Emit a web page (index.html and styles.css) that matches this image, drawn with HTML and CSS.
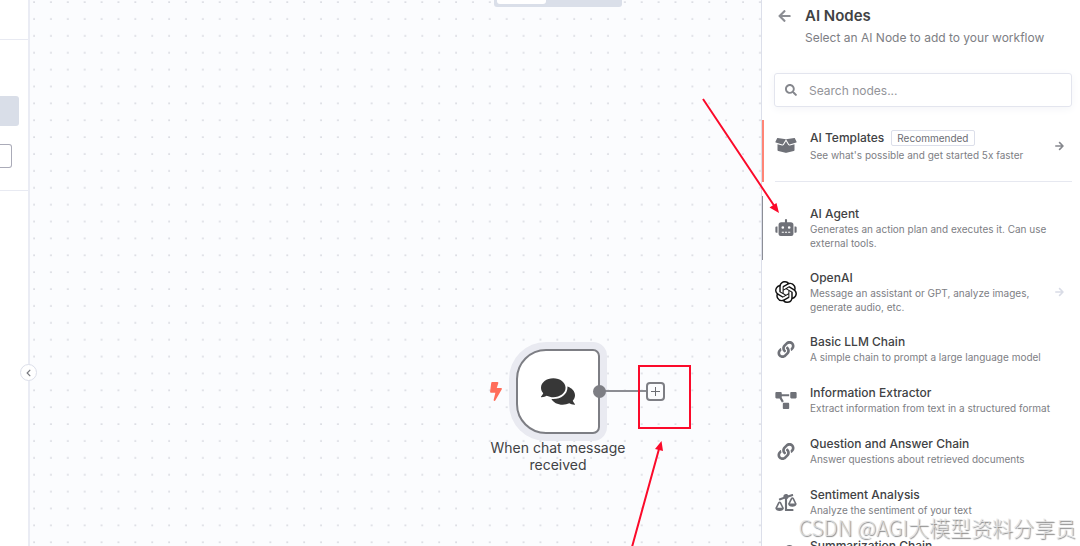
FILE: index.html
```html
<!DOCTYPE html>
<html lang="en">
<head>
    <meta charset="UTF-8">
    <meta name="viewport" content="width=device-width, initial-scale=1.0">
    <title>AI Nodes</title>
    <link rel="stylesheet" href="styles.css">
</head>
<body>
    <!-- Shared icons -->
    <svg class="sprite" aria-hidden="true">
        <symbol id="arrow" viewBox="0 0 448 512"><path d="M257.5 445.1l-22.2 22.2c-9.4 9.4-24.6 9.4-33.9 0L7 273c-9.4-9.4-9.4-24.6 0-33.9L201.4 44.7c9.4-9.4 24.6-9.4 33.9 0l22.2 22.2c9.5 9.5 9.3 25-.4 34.3L136.6 216H424c13.3 0 24 10.7 24 24v32c0 13.3-10.7 24-24 24H136.6l120.5 114.8c9.8 9.3 10 24.8.4 34.3z"/></symbol>
        <symbol id="link" viewBox="0 0 512 512"><path d="M326.612 185.391c59.747 59.809 58.927 155.698.36 214.59-.11.12-.24.25-.36.37l-67.2 67.2c-59.27 59.27-155.699 59.262-214.96 0-59.27-59.26-59.27-155.7 0-214.96l37.106-37.106c9.84-9.84 26.786-3.3 27.294 10.606.648 17.722 3.826 35.527 9.69 52.721 1.986 5.822.567 12.262-3.783 16.612l-13.087 13.087c-28.026 28.026-28.905 73.66-1.155 101.96 28.024 28.579 74.086 28.749 102.325.51l67.2-67.19c28.191-28.191 28.073-73.757 0-101.83-3.701-3.694-7.429-6.564-10.341-8.569a16.037 16.037 0 0 1-6.947-12.606c-.396-10.567 3.348-21.456 11.698-29.806l21.054-21.055c5.521-5.521 14.182-6.199 20.584-1.731a152.482 152.482 0 0 1 20.522 17.197zM467.547 44.449c-59.261-59.262-155.69-59.27-214.96 0l-67.2 67.2c-.12.12-.25.25-.36.37-58.566 58.892-59.387 154.781.36 214.59a152.454 152.454 0 0 0 20.521 17.196c6.402 4.468 15.064 3.789 20.584-1.731l21.054-21.055c8.35-8.35 12.094-19.239 11.698-29.806a16.037 16.037 0 0 0-6.947-12.606c-2.912-2.005-6.64-4.875-10.341-8.569-28.073-28.073-28.191-73.639 0-101.83l67.2-67.19c28.239-28.239 74.3-28.069 102.325.51 27.75 28.3 26.872 73.934-1.155 101.96l-13.087 13.087c-4.35 4.35-5.769 10.79-3.783 16.612 5.864 17.194 9.042 34.999 9.69 52.721.509 13.906 17.454 20.446 27.294 10.606l37.106-37.106c59.271-59.259 59.271-155.699.001-214.959z"/></symbol>
    </svg>

    <div class="app">
        <aside class="sidebar">
            <div class="sidebar-top"></div>
            <div class="sidebar-menu">
                <div class="sidebar-active"></div>
                <div class="sidebar-box"></div>
            </div>
            <button class="collapse" aria-label="Collapse sidebar">
                <svg viewBox="0 0 320 512"><path d="M34.52 239.03L228.87 44.69c9.37-9.37 24.57-9.37 33.94 0l22.67 22.67c9.36 9.36 9.37 24.52.04 33.9L131.49 256l154.02 154.75c9.34 9.38 9.32 24.54-.04 33.9l-22.67 22.67c-9.37 9.37-24.57 9.37-33.94 0L34.52 272.97c-9.37-9.37-9.37-24.57 0-33.94z"/></svg>
            </button>
        </aside>

        <main class="canvas">
            <svg class="grid" aria-hidden="true">
                <defs>
                    <pattern id="dots" width="16" height="16" patternUnits="userSpaceOnUse" patternTransform="translate(3 1) scale(1.055)">
                        <circle cx="1" cy="1" r="0.8"/>
                    </pattern>
                </defs>
                <rect width="100%" height="100%" fill="url(#dots)"/>
            </svg>

            <div class="tabs"><div class="tab-active"></div></div>

            <svg class="bolt" viewBox="0 0 320 512"><path d="M296 160H180.6l42.6-129.8C227.2 15 215.7 0 200 0H56C44 0 33.8 8.9 32.2 20.8l-32 240C-1.7 275.2 9.5 288 24 288h118.7L96.6 482.5c-3.6 15.2 8 29.5 23.3 29.5 8.4 0 16.4-4.4 20.8-12l176-304c9.3-15.9-2.2-36-20.7-36z"/></svg>
            <div class="node">
                <svg viewBox="0 0 576 512"><path d="M416 192c0-88.4-93.1-160-208-160S0 103.6 0 192c0 34.3 14.1 65.9 38 92-13.4 30.2-35.5 54.2-35.8 54.5-2.2 2.3-2.8 5.7-1.5 8.7S4.8 352 8 352c36.6 0 66.9-12.3 88.7-25 32.2 15.7 70.3 25 111.3 25 114.9 0 208-71.6 208-160zm122 220c23.9-26 38-57.7 38-92 0-66.9-53.5-124.2-129.3-148.1.9 6.6 1.3 13.3 1.3 20.1 0 105.9-107.7 192-240 192-10.8 0-21.3-.8-31.7-1.9C207.8 439.6 281.8 480 368 480c41 0 79.1-9.2 111.3-25 21.8 12.7 52.1 25 88.7 25 3.2 0 6.1-1.9 7.3-4.8 1.3-2.9.7-6.3-1.5-8.7-.3-.3-22.4-24.2-35.8-54.5z"/></svg>
            </div>
            <div class="edge"></div>
            <div class="port"></div>
            <button class="plus" aria-label="Add node">
                <svg viewBox="0 0 11 11"><path d="M5.5 1v9M1 5.500h9"/></svg>
            </button>
            <div class="node-label">When chat message received</div>
        </main>

        <section class="panel">
            <header class="panel-header">
                <button class="back" aria-label="Back"><svg><use href="#arrow"/></svg></button>
                <div>
                    <h1>AI Nodes</h1>
                    <p>Select an AI Node to add to your workflow</p>
                </div>
            </header>

            <label class="search">
                <svg viewBox="0 0 512 512"><path d="M505 442.7L405.3 343c-4.5-4.5-10.6-7-17-7H372c27.6-35.3 44-79.7 44-128C416 93.1 322.9 0 208 0S0 93.1 0 208s93.1 208 208 208c48.3 0 92.7-16.4 128-44v16.3c0 6.4 2.5 12.5 7 17l99.7 99.7c9.4 9.4 24.6 9.4 33.9 0l28.3-28.3c9.4-9.4 9.4-24.6.1-34zM208 336c-70.7 0-128-57.2-128-128 0-70.7 57.2-128 128-128 70.7 0 128 57.2 128 128 0 70.7-57.2 128-128 128z"/></svg>
                <input type="text" placeholder="Search nodes..." aria-label="Search nodes">
            </label>

            <button class="item item-templates">
                <svg class="icon" viewBox="0 0 640 512"><path d="M425.7 256c-16.9 0-32.8-9-41.4-23.4L320 126l-64.2 106.6c-8.7 14.5-24.6 23.5-41.5 23.5-4.5 0-9-.6-13.3-1.9L64 215v178c0 14.7 10 27.5 24.2 31l216.2 54.1c10.2 2.5 20.9 2.5 31 0L551.8 424c14.2-3.6 24.2-16.4 24.2-31V215l-137 39.1c-4.3 1.3-8.8 1.9-13.3 1.9zm212.6-112.2L586.8 41c-3.1-6.2-9.8-9.8-16.7-8.9L320 64l91.7 152.1c3.8 6.3 11.4 9.3 18.5 7.3l197.9-56.5c9.9-2.9 14.7-13.9 10.2-23.1zM53.2 41L1.7 143.8c-4.6 9.2.3 20.2 10.1 23l197.9 56.5c7.1 2 14.7-1 18.5-7.3L320 64 69.8 32.1c-6.9-.8-13.5 2.7-16.6 8.9z"/></svg>
                <span class="text">
                    <span class="title">AI Templates <span class="badge">Recommended</span></span>
                    <span class="desc">See what's possible and get started 5x faster</span>
                </span>
                <svg class="go"><use href="#arrow"/></svg>
            </button>

            <div class="list">
                <button class="item item-active">
                    <svg class="icon" viewBox="0 0 640 512"><path d="M32,224H64V416H32A31.96166,31.96166,0,0,1,0,384V256A31.96166,31.96166,0,0,1,32,224Zm512-48V448a64.06328,64.06328,0,0,1-64,64H160a64.06328,64.06328,0,0,1-64-64V176a79.974,79.974,0,0,1,80-80H288V32a32,32,0,0,1,64,0V96H464A79.974,79.974,0,0,1,544,176ZM264,256a40,40,0,1,0-40,40A39.997,39.997,0,0,0,264,256Zm-8,128H192v32h64Zm96,0H288v32h64ZM456,256a40,40,0,1,0-40,40A39.997,39.997,0,0,0,456,256Zm-8,128H384v32h64ZM640,256V384a31.96166,31.96166,0,0,1-32,32H576V224h32A31.96166,31.96166,0,0,1,640,256Z"/></svg>
                    <span class="text">
                        <span class="title">AI Agent</span>
                        <span class="desc">Generates an action plan and executes it. Can use external tools.</span>
                    </span>
                </button>
                <button class="item">
                    <svg class="icon icon-openai" viewBox="0 0 24 24"><path d="M22.2819 9.8211a5.9847 5.9847 0 0 0-.5157-4.9108 6.0462 6.0462 0 0 0-6.5098-2.9A6.0651 6.0651 0 0 0 4.9807 4.1818a5.9847 5.9847 0 0 0-3.9977 2.9 6.0462 6.0462 0 0 0 .7427 7.0966 5.98 5.98 0 0 0 .511 4.9107 6.051 6.051 0 0 0 6.5146 2.9001A5.9847 5.9847 0 0 0 13.2599 24a6.0557 6.0557 0 0 0 5.7718-4.2058 5.9894 5.9894 0 0 0 3.9977-2.9001 6.0557 6.0557 0 0 0-.7475-7.0729zm-9.022 12.6081a4.4755 4.4755 0 0 1-2.8764-1.0408l.1419-.0804 4.7783-2.7582a.7948.7948 0 0 0 .3927-.6813v-6.7369l2.02 1.1686a.071.071 0 0 1 .038.052v5.5826a4.504 4.504 0 0 1-4.4945 4.4944zm-9.6607-4.1254a4.4708 4.4708 0 0 1-.5346-3.0137l.142.0852 4.783 2.7582a.7712.7712 0 0 0 .7806 0l5.8428-3.3685v2.3324a.0804.0804 0 0 1-.0332.0615L9.74 19.9502a4.4992 4.4992 0 0 1-6.1408-1.6464zM2.3408 7.8956a4.485 4.485 0 0 1 2.3655-1.9728V11.6a.7664.7664 0 0 0 .3879.6765l5.8144 3.3543-2.0201 1.1685a.0757.0757 0 0 1-.071 0l-4.8303-2.7865A4.504 4.504 0 0 1 2.3408 7.872zm16.5963 3.8558L13.1038 8.364 15.1192 7.2a.0757.0757 0 0 1 .071 0l4.8303 2.7913a4.4944 4.4944 0 0 1-.6765 8.1042v-5.6772a.79.79 0 0 0-.407-.667zm2.0107-3.0231l-.142-.0852-4.7735-2.7818a.7759.7759 0 0 0-.7854 0L9.409 9.2297V6.8974a.0662.0662 0 0 1 .0284-.0615l4.8303-2.7866a4.4992 4.4992 0 0 1 6.6802 4.66zM8.3065 12.863l-2.02-1.1638a.0804.0804 0 0 1-.038-.0567V6.0742a4.4992 4.4992 0 0 1 7.3757-3.4537l-.142.0805L8.704 5.459a.7948.7948 0 0 0-.3927.6813zm1.0976-2.3654l2.602-1.4998 2.6069 1.4998v2.9994l-2.5974 1.4997-2.6067-1.4997Z"/></svg>
                    <span class="text">
                        <span class="title">OpenAI</span>
                        <span class="desc">Message an assistant or GPT, analyze images, generate audio, etc.</span>
                    </span>
                    <svg class="go go-light"><use href="#arrow"/></svg>
                </button>
                <button class="item">
                    <svg class="icon"><use href="#link"/></svg>
                    <span class="text">
                        <span class="title">Basic LLM Chain</span>
                        <span class="desc">A simple chain to prompt a large language model</span>
                    </span>
                </button>
                <button class="item">
                    <svg class="icon" viewBox="0 0 640 512"><path d="M384 320H256c-17.67 0-32 14.33-32 32v128c0 17.67 14.33 32 32 32h128c17.67 0 32-14.33 32-32V352c0-17.67-14.33-32-32-32zM192 32c0-17.67-14.33-32-32-32H32C14.33 0 0 14.33 0 32v128c0 17.67 14.33 32 32 32h95.72l73.16 128.04C211.98 300.98 232.4 288 256 288h.28L192 175.51V128h224V64H192V32zM608 0H480c-17.67 0-32 14.33-32 32v128c0 17.67 14.33 32 32 32h128c17.67 0 32-14.33 32-32V32c0-17.67-14.33-32-32-32z"/></svg>
                    <span class="text">
                        <span class="title">Information Extractor</span>
                        <span class="desc">Extract information from text in a structured format</span>
                    </span>
                </button>
                <button class="item">
                    <svg class="icon"><use href="#link"/></svg>
                    <span class="text">
                        <span class="title">Question and Answer Chain</span>
                        <span class="desc">Answer questions about retrieved documents</span>
                    </span>
                </button>
                <button class="item">
                    <svg class="icon" viewBox="0 0 640 512"><path d="M528 448H352V153.25c20.42-8.94 36.1-26.22 43.38-47.47l132-44.26c8.38-2.81 12.89-11.88 10.08-20.26l-10.17-30.34C524.48 2.54 515.41-1.97 507.03.84L389.11 40.37C375.3 16.36 349.69 0 320 0c-44.18 0-80 35.82-80 80 0 3.43.59 6.71 1.01 10.03l-128.39 43.05c-8.38 2.81-12.89 11.88-10.08 20.26l10.17 30.34c2.81 8.38 11.88 12.89 20.26 10.08l142.05-47.63c4.07 2.77 8.43 5.12 12.99 7.12V496c0 8.84 7.16 16 16 16h224c8.84 0 16-7.16 16-16v-32c-.01-8.84-7.17-16-16.01-16zm111.98-144c0-16.18 1.34-8.73-85.05-181.51-17.65-35.29-68.19-35.36-85.87 0-87.12 174.26-85.04 165.84-85.04 181.51H384c0 44.18 57.31 80 128 80s128-35.82 128-80h-.02zM440 288l72-144 72 144H440zm-269.07-37.51c-17.65-35.29-68.19-35.36-85.87 0C-2.06 424.75.02 416.33.02 432H0c0 44.18 57.31 80 128 80s128-35.82 128-80h-.02c0-16.18 1.34-8.73-85.05-181.51zM56 416l72-144 72 144H56z"/></svg>
                    <span class="text">
                        <span class="title">Sentiment Analysis</span>
                        <span class="desc">Analyze the sentiment of your text</span>
                    </span>
                </button>
                <button class="item">
                    <svg class="icon"><use href="#link"/></svg>
                    <span class="text">
                        <span class="title">Summarization Chain</span>
                    </span>
                </button>
            </div>
        </section>
    </div>

    <!-- Red marks over the workflow -->
    <svg class="marks" aria-hidden="true">
        <rect x="639" y="366" width="51" height="62"/>
        <path d="M703 99L775 207M632 547L659 449"/>
        <path class="head" d="M779 213L769.500 207.500L776.500 203ZM661.500 441L655 449L663 451Z"/>
    </svg>

    <div class="watermark">CSDN @AGI大模型资料分享员</div>
</body>
</html>
```
FILE: styles.css
```css
/* General Styles */
* {
    box-sizing: border-box;
}

body {
    margin: 0;
    font-family: Inter, "Noto Sans CJK SC", sans-serif;
    color: #414244;
    background-color: #fff;
    overflow: hidden;
}

button {
    font: inherit;
    color: inherit;
    background: none;
    border: 0;
    padding: 0;
    cursor: pointer;
}

svg {
    fill: currentColor;
    flex-shrink: 0;
}

.sprite {
    position: absolute;
    width: 0;
    height: 0;
}

.app {
    display: flex;
    height: 100vh;
}

/* Sidebar */
.sidebar {
    position: relative;
    width: 30px;
    border-right: 2px solid #eaecf4;
}

.sidebar-top {
    height: 40px;
    border-bottom: 1px solid #e8eaf2;
}

.sidebar-menu {
    display: flex;
    flex-direction: column;
    gap: 18px;
    padding: 56px 0 22px;
    border-bottom: 1px solid #e8eaf2;
}

.sidebar-active {
    width: 19px;
    height: 30px;
    background-color: #d9dee8;
    border-radius: 0 3px 3px 0;
}

.sidebar-box {
    width: 12px;
    height: 24px;
    border: 1px solid #aaabb8;
    border-left: 0;
    border-radius: 0 3px 3px 0;
}

.collapse {
    position: absolute;
    top: 364px;
    right: -9px;
    z-index: 2;
    display: flex;
    align-items: center;
    justify-content: center;
    width: 17px;
    height: 17px;
    color: #77797f;
    background-color: #fff;
    border: 1px solid #dcdfea;
    border-radius: 50%;
}

.collapse svg {
    height: 8px;
}

/* Canvas */
.canvas {
    position: relative;
    flex: 1;
    background-color: #fbfcfe;
    overflow: hidden;
}

.grid {
    display: block;
    width: 100%;
    height: 100%;
    color: #ccced6;
}

.tabs {
    position: absolute;
    top: 0;
    left: 464px;
    width: 128px;
    height: 7px;
    padding: 0 3px;
    background-color: #dadfe9;
    border-radius: 0 0 3px 3px;
}

.tab-active {
    width: 49px;
    height: 4px;
    background-color: #fff;
    border-radius: 0 0 3px 3px;
}

.bolt {
    position: absolute;
    top: 382px;
    left: 460px;
    width: 12px;
    height: 19px;
    color: #ff6d5a;
}

.node {
    position: absolute;
    top: 349px;
    left: 486px;
    display: flex;
    align-items: center;
    justify-content: center;
    width: 84px;
    height: 85px;
    color: #373737;
    background-color: #fff;
    border: 2px solid #7d7e84;
    border-radius: 30px 7px 7px 30px;
    box-shadow: 0 0 0 7px #e9eaf1;
}

.node svg {
    width: 34px;
    height: 31px;
}

.edge {
    position: absolute;
    top: 390px;
    left: 570px;
    width: 48px;
    height: 2px;
    background-color: #8c8d93;
}

.port {
    position: absolute;
    top: 385px;
    left: 563px;
    width: 13px;
    height: 13px;
    background-color: #7d7e84;
    border-radius: 50%;
}

.plus {
    position: absolute;
    top: 382px;
    left: 616px;
    display: flex;
    align-items: center;
    justify-content: center;
    width: 19px;
    height: 19px;
    background-color: #fbfcfe;
    border: 2px solid #7d7e84;
    border-radius: 4px;
}

.plus svg {
    width: 11px;
    height: 11px;
    stroke: #6c6d73;
}

.node-label {
    position: absolute;
    top: 439px;
    left: 458px;
    width: 140px;
    font-size: 14px;
    line-height: 17px;
    text-align: center;
}

/* Panel */
.panel {
    width: 319px;
    border-left: 1px solid #dcdfea;
    overflow: hidden;
}

.panel-header {
    display: flex;
    gap: 14px;
    height: 73px;
    padding: 6px 8px 0 16px;
}

.back {
    width: 13px;
    height: 20px;
    color: #8c8e94;
}

.back svg {
    display: block;
    width: 13px;
    height: 14px;
    margin: auto;
}

h1 {
    margin: 0;
    font-size: 15px;
    font-weight: 600;
    line-height: 20px;
}

p {
    margin: 4px 0 0;
    font-size: 12px;
    line-height: 16px;
    color: #7d7e84;
}

.search {
    display: flex;
    align-items: center;
    gap: 12px;
    height: 34px;
    margin: 0 8px 13px 12px;
    padding: 0 10px;
    color: #85878d;
    border: 1px solid #e3e5ee;
    border-radius: 3px;
    box-shadow: 0 2px 8px #f4f5f8;
}

.search svg {
    width: 12px;
    height: 12px;
}

.search input {
    flex: 1;
    min-width: 0;
    padding: 0;
    font: inherit;
    font-size: 12px;
    border: 0;
    outline: 0;
}

.search input::placeholder {
    color: #939499;
}

/* Node items */
.item {
    display: flex;
    align-items: center;
    gap: 13px;
    width: 100%;
    padding: 9px 16px 10px 13px;
    text-align: left;
}

.item-templates {
    position: relative;
    padding-bottom: 20px;
    box-shadow: inset 2px 0 #ff8576;
}

.item-templates::after {
    content: "";
    position: absolute;
    right: 8px;
    bottom: 0;
    left: 13px;
    height: 1px;
    background-color: #e6e8f0;
}

.item-active {
    box-shadow: inset 1px 0 #8c8e96;
}

.list {
    padding-top: 14px;
}

.icon {
    width: 22px;
    height: 17px;
    color: #6f7178;
}

.icon-openai {
    height: 22px;
    color: #111;
}

.text {
    flex: 1;
    min-width: 0;
    min-height: 32px;
}

.title {
    display: flex;
    align-items: center;
    gap: 7px;
    font-size: 12px;
    font-weight: 500;
    line-height: 17px;
}

.desc {
    display: block;
    font-size: 10px;
    line-height: 14px;
    color: #7d7e84;
}

.item-templates .desc {
    padding-top: 2px;
}

.badge {
    padding: 0 5px;
    font-size: 10px;
    font-weight: 400;
    line-height: 14px;
    color: #6c6d73;
    border: 1px solid #dcdfea;
    border-radius: 2px;
}

.go {
    width: 9px;
    height: 10px;
    color: #85878d;
    transform: rotate(180deg);
}

.go-light {
    color: #d9dce6;
}

/* Marks */
.marks {
    position: absolute;
    top: 0;
    left: 0;
    width: 100%;
    height: 100%;
    fill: none;
    stroke: #fb0a2a;
    stroke-width: 2;
    pointer-events: none;
}

.head {
    fill: #fb0a2a;
    stroke: none;
}

.watermark {
    position: absolute;
    right: 4px;
    bottom: 4px;
    font-family: "Noto Sans CJK SC", sans-serif;
    font-size: 21px;
    font-weight: 300;
    line-height: 30px;
    color: rgba(225, 225, 225, 0.8);
    text-shadow: 1px 1px 1px #888;
    white-space: nowrap;
    pointer-events: none;
}
```
